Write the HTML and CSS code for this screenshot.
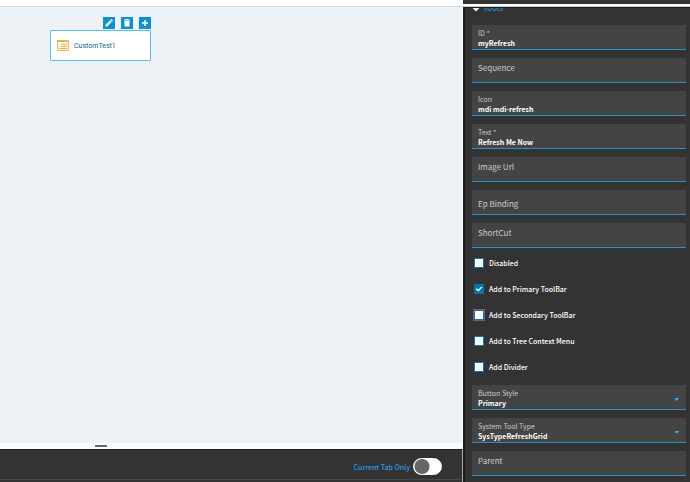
FILE: index.html
```
<!DOCTYPE html>
<html lang="en">
<head>
    <meta charset="UTF-8">
    <meta name="viewport" content="width=device-width, initial-scale=1.0">
    <title>Tool Properties</title>
    <link rel="stylesheet" href="styles.css">
</head>
<body>
    <div class="app">
        <main class="designer">
            <div class="designer-top"></div>
            <div class="canvas">
                <div class="widget">
                    <div class="widget-actions">
                        <button type="button" class="action" aria-label="Edit">
                            <svg viewBox="0 0 12 12"><path d="M2.500 9.500V7.800L6.800 3.500l1.700 1.700L4.200 9.500zM7.300 3l1-1 1.700 1.700-1 1z" fill="#fff"/></svg>
                        </button>
                        <button type="button" class="action" aria-label="Delete">
                            <svg viewBox="0 0 12 12"><path d="M3 2.500h2l.4-.5h1.200l.4.5h2v1H3zM3.500 4h5v5.500h-5z" fill="#fff"/></svg>
                        </button>
                        <button type="button" class="action" aria-label="Add">
                            <svg viewBox="0 0 12 12"><path d="M6 3v6M3 6h6" stroke="#fff" stroke-width="1.500"/></svg>
                        </button>
                    </div>
                    <div class="widget-card">
                        <svg class="widget-icon" viewBox="0 0 12 11">
                            <path d="M.5.5h11v10H.5z" fill="#fff8ea" stroke="#f0b65c"/>
                            <path d="M0 0h12v2H0z" fill="#eeb04f"/>
                            <path d="M8 1h1M10 1h1" stroke="#fff" stroke-width=".6"/>
                            <path d="M4 4.500h6M4 6.500h6M2 8.500h8" stroke="#eeb04f"/>
                        </svg>
                        <span>CustomTest1</span>
                    </div>
                </div>
            </div>
            <div class="splitter"><span class="splitter-handle"></span></div>
            <footer class="footer">
                <label class="toggle">
                    <span>Current Tab Only</span>
                    <input type="checkbox" role="switch">
                </label>
            </footer>
        </main>

        <aside class="panel">
            <div class="panel-top"></div>
            <h2 class="panel-title">
                <svg viewBox="0 0 8 8"><path d="M1 2 4 5l3-3" fill="none" stroke="#fff" stroke-width="2"/></svg>
                Tools
            </h2>

            <div class="fields">
                <div class="field">
                    <label for="tool-id">ID *</label>
                    <input type="text" id="tool-id" value="myRefresh">
                </div>
                <div class="field empty">
                    <label for="sequence">Sequence</label>
                    <input type="text" id="sequence">
                </div>
                <div class="field">
                    <label for="icon">Icon</label>
                    <input type="text" id="icon" value="mdi mdi-refresh">
                </div>
                <div class="field">
                    <label for="text">Text *</label>
                    <input type="text" id="text" value="Refresh Me Now">
                </div>
                <div class="field empty">
                    <label for="image-url">Image Url</label>
                    <input type="text" id="image-url">
                </div>
                <div class="field empty low">
                    <label for="ep-binding">Ep Binding</label>
                    <input type="text" id="ep-binding">
                </div>
                <div class="field empty">
                    <label for="shortcut">ShortCut</label>
                    <input type="text" id="shortcut">
                </div>
            </div>

            <div class="checks">
                <label class="check"><input type="checkbox"> Disabled</label>
                <label class="check"><input type="checkbox" checked> Add to Primary ToolBar</label>
                <label class="check current"><input type="checkbox"> Add to Secondary ToolBar</label>
                <label class="check"><input type="checkbox"> Add to Tree Context Menu</label>
                <label class="check"><input type="checkbox"> Add Divider</label>
            </div>

            <div class="fields">
                <div class="field">
                    <label for="button-style">Button Style</label>
                    <select id="button-style">
                        <option>Primary</option>
                    </select>
                </div>
                <div class="field">
                    <label for="tool-type">System Tool Type</label>
                    <select id="tool-type">
                        <option>SysTypeRefreshGrid</option>
                    </select>
                </div>
                <div class="field empty">
                    <label for="parent">Parent</label>
                    <input type="text" id="parent">
                </div>
            </div>
        </aside>
    </div>
</body>
</html>
```

FILE: styles.css
```
* {
    box-sizing: border-box;
}

body {
    margin: 0;
    font-family: "Noto Sans CJK SC", "Noto Sans", sans-serif;
    font-size: 7px;
    line-height: 10px;
    color: #fff;
    background-color: #333;
}

.app {
    display: grid;
    grid-template-columns: 1fr 227px;
    height: 100vh;
    overflow: hidden;
}

.designer {
    display: flex;
    flex-direction: column;
}

.designer-top {
    height: 7px;
    background-color: #fff;
    border-bottom: 1px solid #d8d8d8;
}

.canvas {
    flex: 1;
    padding: 10px 50px;
    border-right: 1px solid #fff;
    background-color: #edf2f6;
}

.widget {
    width: 101px;
}

.widget-actions {
    display: flex;
    justify-content: flex-end;
    gap: 6px;
    margin-bottom: 1px;
}

.action {
    width: 12px;
    height: 12px;
    padding: 0;
    border: none;
    background-color: #1190d0;
    cursor: pointer;
}

.action svg {
    display: block;
}

.widget-card {
    display: flex;
    align-items: center;
    gap: 5px;
    height: 31px;
    padding: 0 6px;
    border: 1px solid #5bbcec;
    border-radius: 1px;
    background-color: #fff;
    color: #0c5f88;
    font-family: Roboto, sans-serif;
}

.widget-icon {
    width: 12px;
    height: 11px;
}

.splitter {
    display: flex;
    justify-content: center;
    align-items: center;
    height: 6px;
    padding-right: 262px;
    background-color: #fbfcfc;
}

.splitter-handle {
    width: 12px;
    height: 2px;
    background-color: #666;
}

.footer {
    display: flex;
    justify-content: flex-end;
    height: 33px;
    padding: 8px 20px 0 0;
    border-top: 1px solid #222;
    border-right: 1px solid #aaa;
    background: linear-gradient(#484848, #484848) 0 calc(100% - 2px) / 100% 1px no-repeat #333;
}

.toggle {
    display: flex;
    align-items: center;
    gap: 3px;
    height: 17px;
    color: #2b9bea;
    font-weight: 500;
}

.toggle input {
    appearance: none;
    width: 29px;
    height: 17px;
    margin: 0;
    border: 1px solid #fff;
    border-radius: 9px;
    background: radial-gradient(circle at 8px 50%, #666 7px, #fff 8px);
}

.panel {
    border-left: 2px solid #1c1c1c;
    background-color: #333;
}

.panel-top {
    height: 7px;
    margin-left: -2px;
    border-top: 4px solid #333;
    border-bottom: 1px solid #d0d0d0;
    background-color: #fff;
}

/* the heading is scrolled partly under the top bar */
.panel-title {
    display: flex;
    align-items: flex-end;
    gap: 3px;
    height: 6px;
    margin: 0 0 12px;
    padding-left: 7px;
    overflow: hidden;
    border-top: 1px solid #1c1c1c;
    color: #2199d6;
    font-size: 8px;
    font-weight: 500;
    line-height: 10px;
}

.panel-title svg {
    width: 8px;
    height: 8px;
}

.fields {
    display: flex;
    flex-direction: column;
    gap: 8px;
    padding: 0 4px 0 7px;
}

.field {
    display: flex;
    flex-direction: column;
    height: 25px;
    padding: 4px 6px 0;
    border-bottom: 1px solid #2791c8;
    background-color: #444;
}

.field label {
    color: #ccc;
    font-size: 7px;
    line-height: 9px;
}

.field input,
.field select {
    width: 100%;
    height: 10px;
    padding: 0;
    border: none;
    outline: none;
    background: none;
    color: #fff;
    font-family: inherit;
    font-size: 7px;
    font-weight: bold;
    line-height: 10px;
}

.field select {
    appearance: none;
    background: linear-gradient(to bottom right, #2aa9ec 50%, transparent 50%) right 0 top 0 / 3px 3px no-repeat,
                linear-gradient(to bottom left, #2aa9ec 50%, transparent 50%) right 3px top 0 / 3px 3px no-repeat;
}

.field.empty {
    padding-top: 5px;
}

.field.empty label {
    font-size: 8px;
    line-height: 10px;
}

.field.low {
    padding-top: 9px;
}

.checks {
    margin: 2px 0 5px;
    padding-left: 9px;
}

.check {
    display: flex;
    align-items: center;
    gap: 5px;
    height: 26px;
    font-weight: 500;
}

.check input {
    appearance: none;
    width: 10px;
    height: 10px;
    margin: 0;
    border: 1px solid #0b73b0;
    background-color: #fff;
}

.check input:checked {
    display: grid;
    place-items: center;
    background-color: #0b73b0;
}

.check input:checked::before {
    content: "";
    width: 7px;
    height: 5px;
    background-color: #fff;
    clip-path: polygon(0 50%, 15% 35%, 40% 65%, 85% 0, 100% 15%, 40% 100%);
}

.check.current input {
    outline: 1px solid #85566b;
}
```
